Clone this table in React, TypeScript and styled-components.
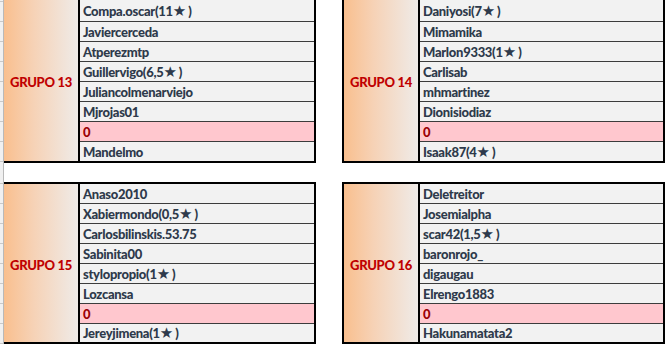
import React from "react";
import styled, { createGlobalStyle } from "styled-components";

const GlobalStyle = createGlobalStyle`
  html, body { margin: 0; padding: 0; background: #ffffff; }
  body { font-family: Lato, "DejaVu Sans", sans-serif; overflow: hidden; }
`;

type Group = { title: string; names: string[] };

const groups: Group[] = [
  {
    title: "GRUPO 13",
    names: ["Compa.oscar(11★)", "Javiercerceda", "Atperezmtp", "Guillervigo(6,5★)", "Juliancolmenarviejo", "Mjrojas01", "0", "Mandelmo"],
  },
  {
    title: "GRUPO 14",
    names: ["Daniyosi(7★)", "Mimamika", "Marlon9333(1★)", "Carlisab", "mhmartinez", "Dionisiodiaz", "0", "Isaak87(4★)"],
  },
  {
    title: "GRUPO 15",
    names: ["Anaso2010", "Xabiermondo(0,5★)", "Carlosbilinskis.53.75", "Sabinita00", "stylopropio(1★)", "Lozcansa", "0", "Jereyjimena(1★)"],
  },
  {
    title: "GRUPO 16",
    names: ["Deletreitor", "Josemialpha", "scar42(1,5★)", "baronrojo_", "digaugau", "Elrengo1883", "0", "Hakunamatata2"],
  },
];

const Page = styled.div`
  display: flex;
  margin-top: -2px;
`;

const Gutter = styled.div`
  display: grid;
  grid-template-rows: 165px 19px 162px;
  width: 3px;
  border-right: 1px solid #b9b9b9;
`;

const GutterBlock = styled.div<{ $offset: number; $plain?: boolean }>`
  background-color: #f0f0f0;
  background-image: ${(p) =>
    p.$plain
      ? "none"
      : `repeating-linear-gradient(to bottom, transparent 0px, transparent ${p.$offset}px, #c8c8c8 ${p.$offset}px, #c8c8c8 ${p.$offset + 1}px, transparent ${p.$offset + 1}px, transparent 20px)`};
`;

const Board = styled.div`
  display: grid;
  grid-template-columns: 312px 323px;
  grid-template-rows: 165px 162px;
  column-gap: 26px;
  row-gap: 19px;
`;

const Table = styled.div<{ $cutLeft?: boolean }>`
  display: grid;
  grid-template-columns: 76px 1fr;
  border: 2px solid #000;
  border-left-width: ${(p) => (p.$cutLeft ? "0" : "2px")};
  box-sizing: border-box;
`;

const Header = styled.div`
  display: flex;
  align-items: center;
  justify-content: center;
  border-right: 2px solid #000;
  background: linear-gradient(to right, #f9bf8e 0%, #f6d2b6 40%, #efebe8 100%);
  color: #c00000;
  font-weight: 900;
  font-size: 13px;
  letter-spacing: -0.3px;
  padding-top: 3px;
  white-space: nowrap;
`;

const Names = styled.div<{ $rows: string }>`
  display: grid;
  grid-template-rows: ${(p) => p.$rows};
`;

const NameRow = styled.div<{ $empty?: boolean; $first?: boolean }>`
  display: flex;
  align-items: center;
  padding-left: 3px;
  padding-top: 1px;
  border-top: ${(p) => (p.$first ? "none" : "1px solid #3c3c3c")};
  background: ${(p) => (p.$empty ? "#ffc7ce" : "#f2f2f2")};
  color: ${(p) => (p.$empty ? "#9c0006" : "#2e3a4b")};
  font-weight: 900;
  font-size: 13px;
  letter-spacing: -0.3px;
  line-height: 1;
  white-space: nowrap;
  overflow: hidden;
`;

const Star = styled.span`
  font-family: "DejaVu Sans", sans-serif;
  font-size: 15px;
  letter-spacing: 0;
  margin: 0 2px 0 0;
`;

const renderName = (n: string) => {
  const parts = n.split("★");
  if (parts.length === 1) return n;
  return (
    <>
      {parts[0]}
      <Star>★</Star>
      {parts[1]}
    </>
  );
};

const GroupTable: React.FC<{ group: Group; cutLeft?: boolean; rows: string }> = ({ group, cutLeft, rows }) => (
  <Table $cutLeft={cutLeft}>
    <Header>{group.title}</Header>
    <Names $rows={rows}>
      {group.names.map((n, i) => (
        <NameRow key={i} $first={i === 0} $empty={n === "0"}>
          {renderName(n)}
        </NameRow>
      ))}
    </Names>
  </Table>
);

const TOP_ROWS = "21px repeat(7, 20px)";
const BOTTOM_ROWS = "19px repeat(6, 20px) 19px";

export default function App() {
  return (
    <>
      <GlobalStyle />
      <Page>
        <Gutter>
          <GutterBlock $offset={3} />
          <GutterBlock $offset={0} $plain />
          <GutterBlock $offset={1} />
        </Gutter>
        <Board>
          <GroupTable group={groups[0]} cutLeft rows={TOP_ROWS} />
          <GroupTable group={groups[1]} rows={TOP_ROWS} />
          <GroupTable group={groups[2]} cutLeft rows={BOTTOM_ROWS} />
          <GroupTable group={groups[3]} rows={BOTTOM_ROWS} />
        </Board>
      </Page>
    </>
  );
}
